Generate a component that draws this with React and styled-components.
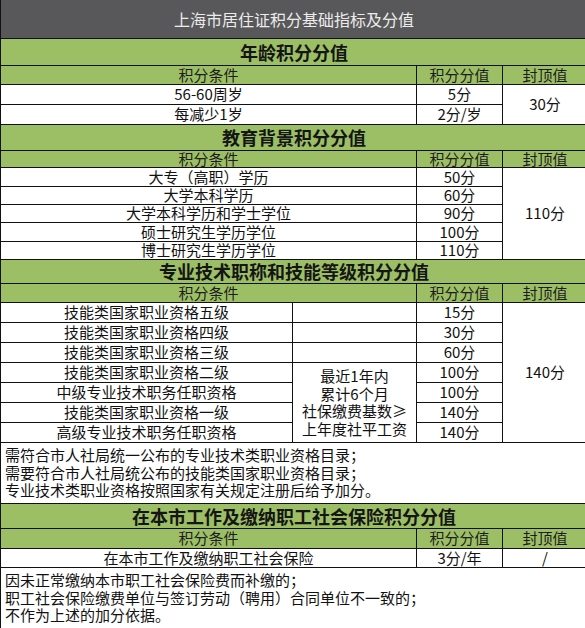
import React from 'react';
import styled, { createGlobalStyle } from 'styled-components';

const GlobalStyle = createGlobalStyle`
  html, body {
    margin: 0;
    padding: 0;
    background: #ffffff;
  }
  body {
    font-family: "Noto Sans CJK SC", "Noto Sans", sans-serif;
    color: #111;
  }
`;

const Sheet = styled.div`
  width: 585px;
  height: 628px;
  overflow: hidden;
  background: #fff;
`;

const Table = styled.table`
  width: 587px;
  table-layout: fixed;
  border-collapse: collapse;
  font-size: 15px;
  line-height: 16px;
`;

const Row = styled.tr`
  height: ${p => p.$h}px;
`;

const TitleCell = styled.td`
  background: #58585a;
  color: #ececec;
  font-size: 16px;
  text-align: center;
  border: 1px solid #111;
  border-top: none;
  padding: 0;
`;

const SectionCell = styled.td`
  background: #9cbf66;
  color: #151515;
  font-size: 18px;
  font-weight: 700;
  text-align: center;
  border: 1px solid #111;
  padding: 0;
`;

const HeadCell = styled.td`
  background: #9cbf66;
  color: #1c1c1c;
  text-align: center;
  border: 1px solid #111;
  padding: 0;
`;

const Cell = styled.td`
  background: #fff;
  text-align: center;
  vertical-align: middle;
  border: 1px solid #111;
  padding: 0;
  white-space: nowrap;
`;

const NoteCell = styled.td`
  background: #fff;
  text-align: left;
  border: 1px solid #111;
  padding: 0 0 0 4px;
`;

const Line = styled.div`
  height: 17.5px;
  line-height: 17.5px;
  white-space: nowrap;
`;

const age = [
  ['56-60周岁', '5分'],
  ['每减少1岁', '2分/岁'],
];

const edu = [
  ['大专（高职）学历', '50分', 19],
  ['大学本科学历', '60分', 18],
  ['大学本科学历和学士学位', '90分', 18],
  ['硕士研究生学历学位', '100分', 19],
  ['博士研究生学历学位', '110分', 18],
];

const skill = [
  ['技能类国家职业资格五级', '15分'],
  ['技能类国家职业资格四级', '30分'],
  ['技能类国家职业资格三级', '60分'],
  ['技能类国家职业资格二级', '100分'],
  ['中级专业技术职务任职资格', '100分'],
  ['技能类国家职业资格一级', '140分'],
  ['高级专业技术职务任职资格', '140分'],
];

const rule = ['最近1年内', '累计6个月', '社保缴费基数≥', '上年度社平工资'];

const skillNotes = [
  '需符合市人社局统一公布的专业技术类职业资格目录；',
  '需要符合市人社局统公布的技能类国家职业资格目录；',
  '专业技术类职业资格按照国家有关规定注册后给予加分。',
];

const insureNotes = [
  '因未正常缴纳本市职工社会保险费而补缴的；',
  '职工社会保险缴费单位与签订劳动（聘用）合同单位不一致的；',
  '不作为上述的加分依据。',
];

function Header({ h }) {
  return (
    <Row $h={h}>
      <HeadCell colSpan={2}>积分条件</HeadCell>
      <HeadCell>积分分值</HeadCell>
      <HeadCell>封顶值</HeadCell>
    </Row>
  );
}

export default function App() {
  return (
    <Sheet>
      <GlobalStyle />
      <Table>
        <colgroup>
          <col style={{ width: 292 }} />
          <col style={{ width: 124 }} />
          <col style={{ width: 86 }} />
          <col style={{ width: 85 }} />
        </colgroup>
        <tbody>
          <Row $h={38}>
            <TitleCell colSpan={4}>上海市居住证积分基础指标及分值</TitleCell>
          </Row>

          <Row $h={27}>
            <SectionCell colSpan={4}>年龄积分分值</SectionCell>
          </Row>
          <Header h={19} />
          {age.map((r, i) => (
            <Row $h={20} key={r[0]}>
              <Cell colSpan={2}>{r[0]}</Cell>
              <Cell>{r[1]}</Cell>
              {i === 0 && <Cell rowSpan={2}>30分</Cell>}
            </Row>
          ))}

          <Row $h={26}>
            <SectionCell colSpan={4}>教育背景积分分值</SectionCell>
          </Row>
          <Header h={17} />
          {edu.map((r, i) => (
            <Row $h={r[2]} key={r[0]}>
              <Cell colSpan={2}>{r[0]}</Cell>
              <Cell>{r[1]}</Cell>
              {i === 0 && <Cell rowSpan={5}>110分</Cell>}
            </Row>
          ))}

          <Row $h={24}>
            <SectionCell colSpan={4}>专业技术职称和技能等级积分分值</SectionCell>
          </Row>
          <Header h={19} />
          {skill.map((r, i) => (
            <Row $h={20} key={r[0]}>
              <Cell>{r[0]}</Cell>
              {i < 3 && <Cell />}
              {i === 3 && (
                <Cell rowSpan={4}>
                  {rule.map(t => <Line key={t}>{t}</Line>)}
                </Cell>
              )}
              <Cell>{r[1]}</Cell>
              {i === 0 && <Cell rowSpan={7}>140分</Cell>}
            </Row>
          ))}
          <Row $h={61}>
            <NoteCell colSpan={4}>
              {skillNotes.map(t => <Line key={t}>{t}</Line>)}
            </NoteCell>
          </Row>

          <Row $h={25}>
            <SectionCell colSpan={4}>在本市工作及缴纳职工社会保险积分分值</SectionCell>
          </Row>
          <Header h={20} />
          <Row $h={19}>
            <Cell colSpan={2}>在本市工作及缴纳职工社会保险</Cell>
            <Cell>3分/年</Cell>
            <Cell>/</Cell>
          </Row>
          <Row $h={61}>
            <NoteCell colSpan={4}>
              {insureNotes.map(t => <Line key={t}>{t}</Line>)}
            </NoteCell>
          </Row>
        </tbody>
      </Table>
    </Sheet>
  );
}
